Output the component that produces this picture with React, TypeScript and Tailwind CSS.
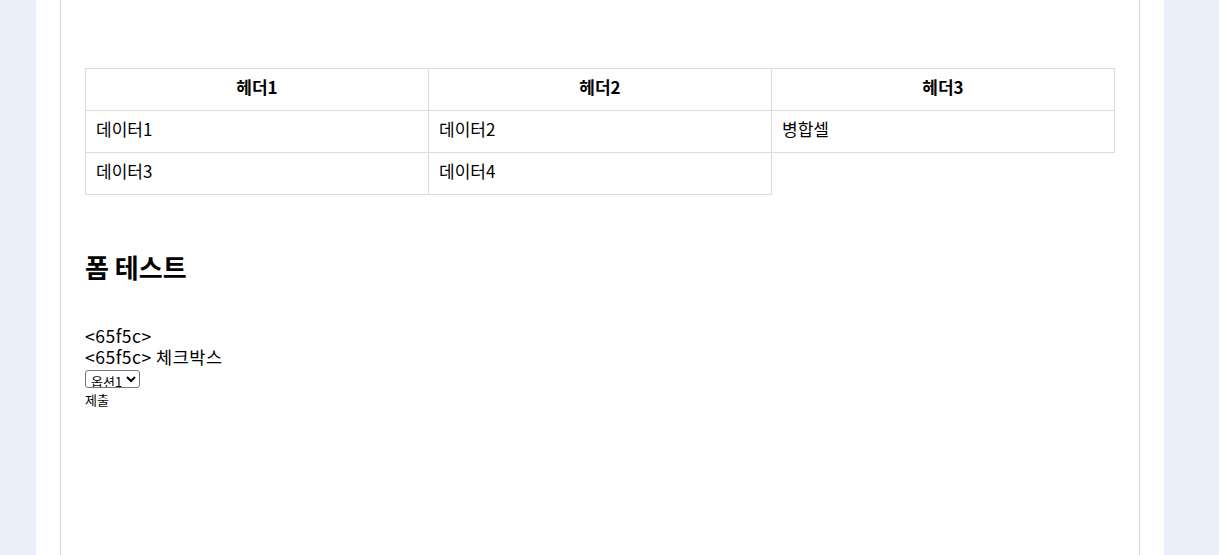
import { useState } from 'react'

const font = { fontFamily: '"Noto Sans CJK KR", "Noto Sans", sans-serif' }

const cell = 'border border-[#dcdcdc] pb-[5px]'

function DataTable() {
  return (
    <table className="w-[1030px] border-collapse table-fixed text-[17px] text-black">
      <thead>
        <tr className="h-[42px]">
          <th className={`${cell} font-bold text-center`}>헤더1</th>
          <th className={`${cell} font-bold text-center`}>헤더2</th>
          <th className={`${cell} font-bold text-center`}>헤더3</th>
        </tr>
      </thead>
      <tbody>
        <tr className="h-[42px]">
          <td className={`${cell} px-[10px]`}>데이터1</td>
          <td className={`${cell} px-[10px]`}>데이터2</td>
          <td className={`${cell} px-[10px]`}>병합셀</td>
        </tr>
        <tr className="h-[42px]">
          <td className={`${cell} px-[10px]`}>데이터3</td>
          <td className={`${cell} px-[10px]`}>데이터4</td>
        </tr>
      </tbody>
    </table>
  )
}

function FormTest() {
  const [option, setOption] = useState('1')

  return (
    <form className="flex flex-col items-start" onSubmit={(e) => e.preventDefault()}>
      <div className="text-[17.5px] leading-[21px] tracking-[0.5px] pt-[1px]">&lt;65f5c&gt;</div>
      <div className="text-[17.5px] leading-[21px] tracking-[0.5px]">&lt;65f5c&gt; 체크박스</div>
      <select
        value={option}
        onChange={(e) => setOption(e.target.value)}
        className="mt-[3px] h-[18px] border border-[#767676] rounded-[3px] bg-white text-[13px] leading-[16px] pl-[1px]"
      >
        <option value="1">옵션1</option>
        <option value="2">옵션2</option>
      </select>
      <button type="submit" className="mt-[3px] text-[13px] leading-[18px]">
        제출
      </button>
    </form>
  )
}

export default function App() {
  return (
    <div className="w-full h-[555px] overflow-hidden bg-[#ebeffa] flex" style={font}>
      <div className="ml-[36px] w-[1128px] bg-white px-[24px] flex">
        {/* 본문 박스 */}
        <div className="w-[1080px] border-x border-[#d4d4d4] bg-white px-[24px] pt-[68px] flex flex-col items-start text-black">
          <DataTable />

          <h2 className="mt-[56px] text-[26px] leading-[32px] font-bold">폼 테스트</h2>

          <div className="mt-[41px]">
            <FormTest />
          </div>
        </div>
      </div>
    </div>
  )
}
